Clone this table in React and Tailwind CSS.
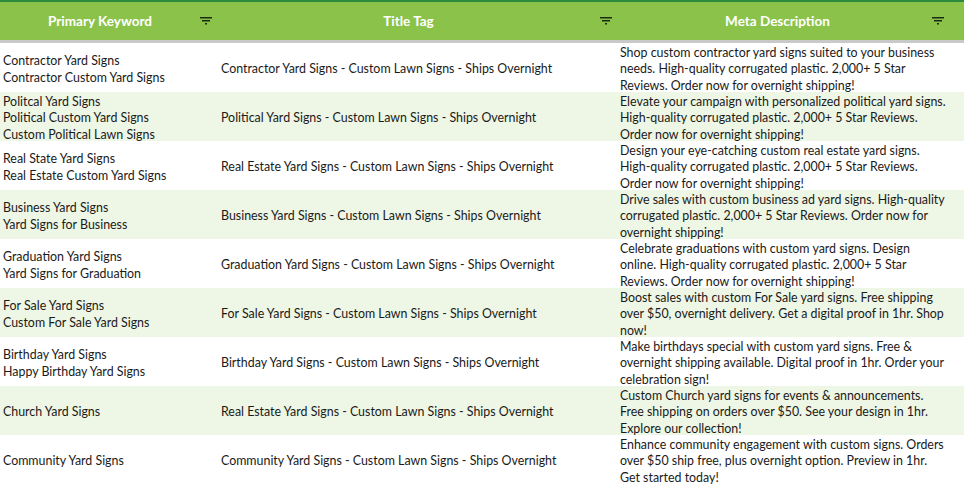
import React from 'react';

const rows = [
    {
        keywords: ['Contractor Yard Signs', 'Contractor Custom Yard Signs'],
        title: 'Contractor Yard Signs - Custom Lawn Signs - Ships Overnight',
        meta: ['Shop custom contractor yard signs suited to your business', 'needs. High-quality corrugated plastic. 2,000+ 5 Star', 'Reviews. Order now for overnight shipping!']
    },
    {
        keywords: ['Politcal Yard Signs', 'Political Custom Yard Signs', 'Custom Political Lawn Signs'],
        title: 'Political Yard Signs - Custom Lawn Signs - Ships Overnight',
        meta: ['Elevate your campaign with personalized political yard signs.', 'High-quality corrugated plastic. 2,000+ 5 Star Reviews.', 'Order now for overnight shipping!']
    },
    {
        keywords: ['Real State Yard Signs', 'Real Estate Custom Yard Signs'],
        title: 'Real Estate Yard Signs - Custom Lawn Signs - Ships Overnight',
        meta: ['Design your eye-catching custom real estate yard signs.', 'High-quality corrugated plastic. 2,000+ 5 Star Reviews.', 'Order now for overnight shipping!']
    },
    {
        keywords: ['Business Yard Signs', 'Yard Signs for Business'],
        title: 'Business Yard Signs - Custom Lawn Signs - Ships Overnight',
        meta: ['Drive sales with custom business ad yard signs. High-quality', 'corrugated plastic. 2,000+ 5 Star Reviews. Order now for', 'overnight shipping!']
    },
    {
        keywords: ['Graduation Yard Signs', 'Yard Signs for Graduation'],
        title: 'Graduation Yard Signs - Custom Lawn Signs - Ships Overnight',
        meta: ['Celebrate graduations with custom yard signs. Design', 'online. High-quality corrugated plastic. 2,000+ 5 Star', 'Reviews. Order now for overnight shipping!']
    },
    {
        keywords: ['For Sale Yard Signs', 'Custom For Sale Yard Signs'],
        title: 'For Sale Yard Signs - Custom Lawn Signs - Ships Overnight',
        meta: ['Boost sales with custom For Sale yard signs. Free shipping', 'over $50, overnight delivery. Get a digital proof in 1hr. Shop', 'now!']
    },
    {
        keywords: ['Birthday Yard Signs', 'Happy Birthday Yard Signs'],
        title: 'Birthday Yard Signs - Custom Lawn Signs - Ships Overnight',
        meta: ['Make birthdays special with custom yard signs. Free &', 'overnight shipping available. Digital proof in 1hr. Order your', 'celebration sign!']
    },
    {
        keywords: ['Church Yard Signs'],
        title: 'Real Estate Yard Signs - Custom Lawn Signs - Ships Overnight',
        meta: ['Custom Church yard signs for events & announcements.', 'Free shipping on orders over $50. See your design in 1hr.', 'Explore our collection!']
    },
    {
        keywords: ['Community Yard Signs'],
        title: 'Community Yard Signs - Custom Lawn Signs - Ships Overnight',
        meta: ['Enhance community engagement with custom signs. Orders', 'over $50 ship free, plus overnight option. Preview in 1hr.', 'Get started today!']
    }
];

const FilterIcon = () => (
    <svg width="12" height="8" viewBox="0 0 12 8" className="shrink-0">
        <rect x="0" y="0" width="12" height="1.5" fill="#1b2a12" />
        <rect x="2" y="3" width="8" height="1.5" fill="#1b2a12" />
        <rect x="5" y="6" width="2" height="1.5" fill="#1b2a12" />
    </svg>
);

const HeaderCell = ({ label, className }) => (
    <div className={`flex items-center h-full ${className}`}>
        <span className="flex-1 text-center text-white font-bold text-[13.5px]">{label}</span>
        <FilterIcon />
    </div>
);

const App = () => {
    return (
        <div className="w-[964px] h-[487px] overflow-hidden bg-white text-[#1a1a1a]" style={{ fontFamily: 'Lato, "Open Sans", sans-serif' }}>
            <div className="h-[2px] bg-[#2a8a3e]" />
            <div className="flex h-[38px] bg-[#8bc34a]">
                <HeaderCell label="Primary Keyword" className="w-[217px] pr-[5px]" />
                <HeaderCell label="Title Tag" className="w-[400px] pr-[5px]" />
                <HeaderCell label="Meta Description" className="w-[347px] pr-[20px] pl-[6px]" />
            </div>
            <div className="h-[3px] bg-[#c9c9c9]" />
            {rows.map((row, i) => (
                <div key={i} className={`flex h-[49px] text-[12.4px] leading-[16.4px] whitespace-nowrap ${i % 2 === 1 ? 'bg-[#eef6e5]' : 'bg-white'}`}>
                    <div className="w-[218px] pl-[3px] flex flex-col justify-center translate-y-[2px]">
                        {row.keywords.map(k => <div key={k}>{k}</div>)}
                    </div>
                    <div className="w-[399px] pl-[3px] flex items-center translate-y-[2px]">{row.title}</div>
                    <div className="flex-1 pl-[3px] flex flex-col justify-center translate-y-[2px]">
                        {row.meta.map(m => <div key={m}>{m}</div>)}
                    </div>
                </div>
            ))}
        </div>
    );
};

export default App;
